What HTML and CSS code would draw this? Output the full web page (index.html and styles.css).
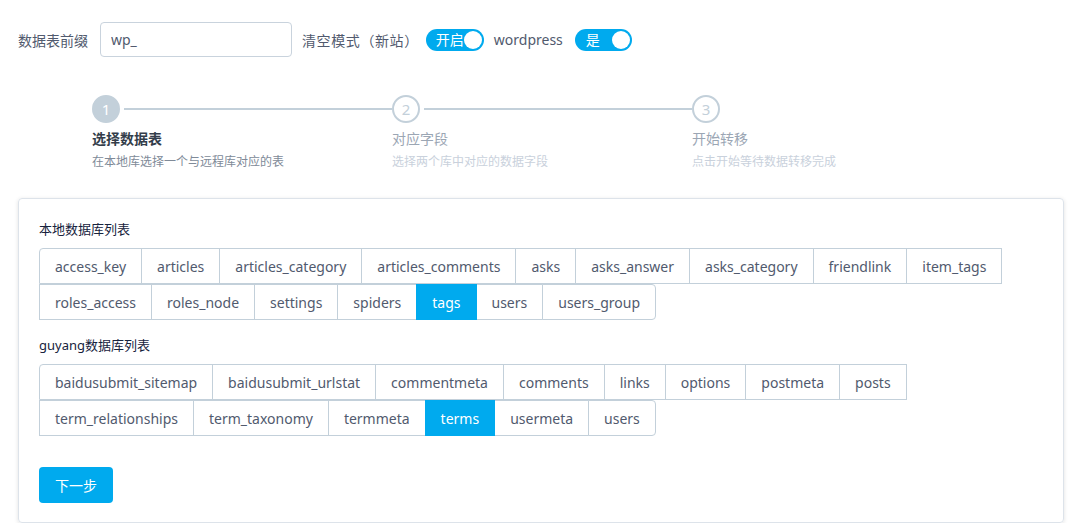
FILE: index.html
```html
<!DOCTYPE html>
<html lang="zh">
<head>
<meta charset="utf-8">
<link rel="stylesheet" href="styles.css">
</head>
<body>
<div class="page">
  <div class="toolbar">
    <span class="label">数据表前缀</span>
    <input class="text-input" type="text" value="wp_">
    <span class="label label-gap">清空模式（新站）</span>
    <span class="switch switch-on"><span class="switch-text">开启</span><span class="knob"></span></span>
    <span class="label label-wp">wordpress</span>
    <span class="switch switch-on switch-wide"><span class="switch-text">是</span><span class="knob"></span></span>
  </div>

  <div class="steps">
    <div class="step step-current">
      <div class="step-head"><span class="circle">1</span><span class="line"></span></div>
      <div class="step-title">选择数据表</div>
      <div class="step-desc">在本地库选择一个与远程库对应的表</div>
    </div>
    <div class="step">
      <div class="step-head"><span class="circle">2</span><span class="line"></span></div>
      <div class="step-title">对应字段</div>
      <div class="step-desc">选择两个库中对应的数据字段</div>
    </div>
    <div class="step step-last">
      <div class="step-head"><span class="circle">3</span></div>
      <div class="step-title">开始转移</div>
      <div class="step-desc">点击开始等待数据转移完成</div>
    </div>
  </div>

  <div class="card">
    <div class="group-title">本地数据库列表</div>
    <div class="btn-group">
      <div class="btn-row">
        <span class="btn first">access_key</span><span class="btn">articles</span><span class="btn">articles_category</span><span class="btn">articles_comments</span><span class="btn">asks</span><span class="btn">asks_answer</span><span class="btn">asks_category</span><span class="btn">friendlink</span><span class="btn">item_tags</span>
      </div>
      <div class="btn-row">
        <span class="btn">roles_access</span><span class="btn">roles_node</span><span class="btn">settings</span><span class="btn">spiders</span><span class="btn active">tags</span><span class="btn">users</span><span class="btn last">users_group</span>
      </div>
    </div>
    <div class="group-title">guyang数据库列表</div>
    <div class="btn-group">
      <div class="btn-row">
        <span class="btn first">baidusubmit_sitemap</span><span class="btn">baidusubmit_urlstat</span><span class="btn">commentmeta</span><span class="btn">comments</span><span class="btn">links</span><span class="btn">options</span><span class="btn">postmeta</span><span class="btn">posts</span>
      </div>
      <div class="btn-row">
        <span class="btn">term_relationships</span><span class="btn">term_taxonomy</span><span class="btn">termmeta</span><span class="btn active">terms</span><span class="btn">usermeta</span><span class="btn last">users</span>
      </div>
    </div>
    <button class="primary-btn" type="button">下一步</button>
  </div>
</div>
</body>
</html>
```

FILE: styles.css
```css
* { box-sizing: border-box; }
html, body { margin: 0; padding: 0; background: #fff; }
body {
  font-family: "Noto Sans", "Noto Sans CJK SC", sans-serif;
  font-size: 14px;
  color: #515a6e;
}
.page { padding: 22px 10px 0 18px; width: 1075px; }

.toolbar { display: flex; align-items: center; height: 35px; }
.label { font-size: 14px; color: #515a6e; white-space: nowrap; }
.text-input {
  margin-left: 12px;
  width: 192px; height: 35px;
  border: 1px solid #c9d3dd; border-radius: 4px;
  padding: 0 10px;
  font: 14px "Noto Sans", "Noto Sans CJK SC", sans-serif;
  color: #515a6e; outline: none;
}
.label-gap { margin-left: 10px; letter-spacing: 0.6px; }
.label-wp { margin-left: 10px; }
.switch {
  position: relative;
  display: inline-flex; align-items: center;
  margin-left: 7px;
  width: 58px; height: 22px; border-radius: 11px;
  background: #00aaee;
}
.switch-wide { width: 57px; margin-left: 12px; }
.switch-text { color: #fff; font-size: 14px; padding-left: 10px; line-height: 22px; }
.switch-wide .switch-text { padding-left: 11px; }
.knob {
  position: absolute; right: 2px; top: 2px;
  width: 18px; height: 18px; border-radius: 50%;
  background: #fff;
}

.steps { display: flex; padding-left: 74px; margin-top: 38px; }
.step { width: 300px; flex: none; }
.step-head { display: flex; align-items: center; height: 28px; }
.circle {
  flex: none;
  width: 28px; height: 28px; border-radius: 50%;
  border: 2px solid #c3d0da; color: #c3d0da;
  display: flex; align-items: center; justify-content: center;
  font-size: 15px;
}
.step-current .circle { background: #c3d0da; color: #fff; }
.line { flex: 1; height: 2px; background: #c3d0da; margin-left: 4px; }
.step-title { margin-top: 5px; font-size: 14px; color: #9ba6b4; line-height: 22px; }
.step-current .step-title { color: #333d4a; font-weight: bold; }
.step-desc { margin-top: 2px; font-size: 12px; color: #c9d1dc; line-height: 20px; }
.step-current .step-desc { color: #808a98; }

.card {
  margin-top: 26px;
  width: 1046px; height: 325px;
  border: 1px solid #dde3ea; border-radius: 4px;
  box-shadow: 0 1px 4px rgba(0,0,0,0.12);
  padding: 20px 20px 0 20px;
}
.group-title { font-size: 13px; color: #17233d; line-height: 20px; margin-bottom: 9px; }
.btn-group { display: flex; flex-direction: column; margin-bottom: 15px; padding-left: 1px; }
.btn-row { display: flex; }
.btn {
  height: 36px;
  padding: 0 15px;
  display: inline-flex; align-items: center;
  border: 1px solid #c3d0da;
  margin-left: -1px;
  font-size: 14px; color: #515a6e; white-space: nowrap;
  background: #fff;
}
.btn.first { border-top-left-radius: 4px; }
.btn.last { border-top-right-radius: 4px; border-bottom-right-radius: 4px; }
.btn.active { background: #00aaee; border-color: #00aaee; color: #fff; position: relative; }
.primary-btn {
  display: block;
  margin-top: 31px;
  width: 74px; height: 36px;
  border: none; border-radius: 4px;
  background: #00aaee; color: #fff;
  font: 14px "Noto Sans", "Noto Sans CJK SC", sans-serif;
}
```
